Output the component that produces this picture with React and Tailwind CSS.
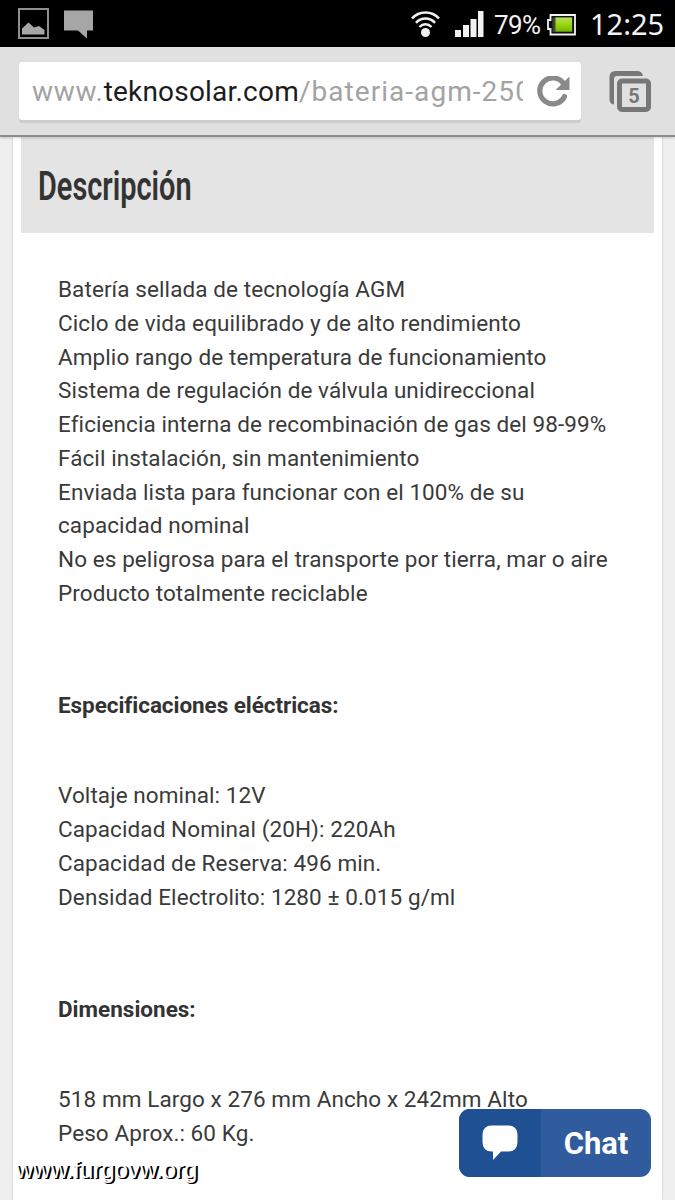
import React from 'react'

const features = [
  'Batería sellada de tecnología AGM',
  'Ciclo de vida equilibrado y de alto rendimiento',
  'Amplio rango de temperatura de funcionamiento',
  'Sistema de regulación de válvula unidireccional',
  'Eficiencia interna de recombinación de gas del 98-99%',
  'Fácil instalación, sin mantenimiento',
  'Enviada lista para funcionar con el 100% de su capacidad nominal',
  'No es peligrosa para el transporte por tierra, mar o aire',
  'Producto totalmente reciclable'
]

const electrical = [
  'Voltaje nominal: 12V',
  'Capacidad Nominal (20H): 220Ah',
  'Capacidad de Reserva: 496 min.',
  'Densidad Electrolito: 1280 ± 0.015 g/ml'
]

const dimensions = [
  '518 mm Largo x 276 mm Ancho x 242mm Alto',
  'Peso Aprox.: 60 Kg.'
]

function StatusBar() {
  return (
    <div className="h-[47px] shrink-0 bg-black flex items-center justify-between pl-[18px] pr-[11px] text-[#f2f2f2]">
      <div className="flex items-center gap-[15px]">
        <svg width="31" height="31" viewBox="0 0 31 31">
          <rect x="1" y="1" width="29" height="29" fill="none" stroke="#8f8f8f" strokeWidth="2" />
          <path d="M4 26.5V20.500L10.500 14.500 16 19.500 21 18 26.500 22v4.500z" fill="#a6a6a6" />
        </svg>
        <svg className="mt-[2px]" width="29" height="29" viewBox="0 0 29 29">
          <path d="M0 0.500h29v20h-6v8L14 20.500H0z" fill="#a6a6a6" />
        </svg>
      </div>
      <div className="flex items-center">
        <svg width="29" height="28" viewBox="0 0 29 28" fill="none" stroke="#f2f2f2">
          <path d="M1 8.500C8 .500 21 .500 28 8.500" strokeWidth="2.600" />
          <path d="M5 12.800C10 7.200 19 7.200 24 12.800" strokeWidth="2.500" />
          <path d="M8.500 17C12 13.200 17 13.200 20.500 17" strokeWidth="2.500" />
          <circle cx="14.500" cy="22.500" r="4.500" fill="#f2f2f2" stroke="none" />
        </svg>
        <svg className="ml-[15px]" width="29" height="26" viewBox="0 0 29 26" fill="#f2f2f2">
          <rect x="0" y="19" width="6" height="7" />
          <rect x="8" y="14" width="6" height="12" />
          <rect x="15.500" y="8" width="6" height="18" />
          <rect x="23" y="0" width="5.500" height="26" />
        </svg>
        <span className="ml-[10px] mt-[4px] w-[46px] whitespace-nowrap text-[26px] tracking-[-0.6px]">79%</span>
        <svg className="ml-[7px] mt-[2px]" width="29" height="22" viewBox="0 0 29 22">
          <defs>
            <linearGradient id="charge" x1="0" y1="0" x2="0" y2="1">
              <stop offset="0" stopColor="#b9e35a" />
              <stop offset="0.500" stopColor="#98d40f" />
              <stop offset="1" stopColor="#74b800" />
            </linearGradient>
          </defs>
          <path d="M3.500 1h24.500v19.500H3.500V15H1V6h2.500z" fill="#111" stroke="#f2f2f2" strokeWidth="1.800" />
          <rect x="5.500" y="3.500" width="20" height="14.500" fill="#3c4632" />
          <rect x="8.500" y="3.500" width="16.500" height="14" fill="url(#charge)" />
        </svg>
        <span className="ml-[14px] w-[74px] whitespace-nowrap font-['Noto_Sans'] text-[29px]">12:25</span>
      </div>
    </div>
  )
}

function BrowserBar() {
  return (
    <div className="relative h-[90px] shrink-0 bg-[#e0e0e0] border-b-2 border-[#8c8c8c] flex items-start pl-[19px] pt-[15px] shadow-[0_1px_3px_rgba(0,0,0,0.18)]">
      <div className="h-[58px] w-[562px] bg-white rounded-[3px] shadow-[0_3px_1px_#cccccc] flex items-center pl-[13px]">
        <div className="w-[491px] overflow-hidden whitespace-nowrap text-[28px] leading-[60px] tracking-[0.7px] pt-[2px] text-[#a3a3a3]">
          www.<span className="tracking-[0.2px] text-[#1c1c1c]">teknosolar.com</span>
          <span className="tracking-[1.05px]">/bateria-agm-250</span>
        </div>
        <svg className="ml-[14px] mt-[2px]" width="34" height="32" viewBox="0 0 34 32">
          <path d="M26.500 7.500A13 13 0 1 0 27.500 20.500" fill="none" stroke="#8a8a8a" strokeWidth="5.200" strokeLinecap="round" />
          <path d="M32.500 0.500V14H18.500z" fill="#8a8a8a" />
        </svg>
      </div>
      <svg className="ml-7 mt-2" width="43" height="43" viewBox="0 0 43 43">
        <path d="M5 34.500Q.500 34 .500 29V7Q.500 1 6.500 1H28Q33 1 34 6H8Q5 6 5 9z" fill="#777" />
        <rect x="10.500" y="11" width="29" height="28.500" rx="2.500" fill="#e0e0e0" stroke="#777" strokeWidth="5" />
        <text x="25" y="32.500" textAnchor="middle" fill="#777" className="font-['Roboto'] text-[20px] font-bold">5</text>
      </svg>
    </div>
  )
}

function Lines({ items }) {
  return (
    <div>
      {items.map((item) => (
        <p key={item}>{item}</p>
      ))}
    </div>
  )
}

function ChatButton() {
  return (
    <button className="absolute left-[459px] top-[1109px] w-[192px] h-[68px] rounded-[11px] overflow-hidden flex bg-[#305c9e] text-white">
      <span className="w-[82px] h-full bg-[#1e5093] flex items-center justify-center">
        <svg width="36" height="36" viewBox="0 0 36 36">
          <path d="M10 .500H26Q35.500 .500 35.500 10V17Q35.500 26.500 26 26.500H19L11 35V26.500H10Q.500 26.500 .500 17V10Q.500 .500 10 .500z" fill="#fff" />
        </svg>
      </span>
      <span className="flex-1 text-center text-[31px] leading-[70px] font-bold">Chat</span>
    </button>
  )
}

function App() {
  return (
    <div className="relative w-[675px] h-[1200px] overflow-hidden flex flex-col bg-[#efefef] font-['Roboto',sans-serif]">
      <StatusBar />
      <BrowserBar />
      <main className="flex-1 ml-[13px] w-[649px] bg-white px-2 shadow-[0_0_2px_rgba(0,0,0,0.2)]">
        <h2 className="h-[96px] bg-[#e4e4e4] pl-[17px] text-[#333333]">
          <span className="inline-block origin-left scale-x-[0.705] text-[41px] leading-[99px] font-semibold whitespace-nowrap">
            Descripción
          </span>
        </h2>
        <div className="pl-[37px] w-[600px] pt-10 text-[22.5px] leading-[33.75px] tracking-[0.09px] text-[#3a3a3a]">
          <Lines items={features} />
          <h3 className="mt-[78.75px] mb-[56.25px] font-bold tracking-[-0.06px] text-[#333333]">Especificaciones eléctricas:</h3>
          <Lines items={electrical} />
          <h3 className="mt-[78.75px] mb-[56.25px] font-bold tracking-normal text-[#333333]">Dimensiones:</h3>
          <Lines items={dimensions} />
        </div>
      </main>
      <ChatButton />
      <div className="absolute left-[16px] top-[1156px] font-['Liberation_Sans',sans-serif] text-[24px] leading-[28px] text-white [text-shadow:1px_1px_0_#000,2px_1px_0_#000]">
        www.furgovw.org
      </div>
    </div>
  )
}

export default App
